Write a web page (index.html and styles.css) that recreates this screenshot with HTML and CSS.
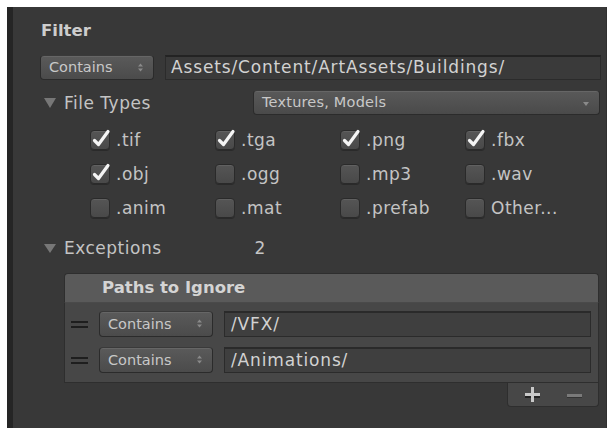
FILE: index.html
```html
<!DOCTYPE html>
<html>
<head>
<meta charset="utf-8">
<link rel="stylesheet" href="styles.css">
</head>
<body>
<div class="inspector">
  <div class="content">
    <div class="title">Filter</div>
    <div class="row filter-row">
      <div class="popup">Contains<span class="updown"><svg width="5" height="9" viewBox="0 0 5 9"><path d="M0 3.5 L2.5 0.5 L5 3.5Z M0 5.5 L2.5 8.5 L5 5.5Z" fill="#8a8a8a"/></svg></span></div>
      <div class="field">Assets/Content/ArtAssets/Buildings/</div>
    </div>
    <div class="row foldout-row">
      <div class="foldout"><span class="tri"></span>File Types</div>
      <div class="dropdown">Textures, Models<span class="caret"></span></div>
    </div>
    <div class="grid">
      <label class="cb"><span class="box checked"><svg width="22" height="22" viewBox="0 0 22 22"><path d="M4.5 12.5 L8.5 16.5 L18 3.5" fill="none" stroke="#f4f4f4" stroke-width="3.2" stroke-linecap="round" stroke-linejoin="round"/></svg></span>.tif</label>
      <label class="cb"><span class="box checked"><svg width="22" height="22" viewBox="0 0 22 22"><path d="M4.5 12.5 L8.5 16.5 L18 3.5" fill="none" stroke="#f4f4f4" stroke-width="3.2" stroke-linecap="round" stroke-linejoin="round"/></svg></span>.tga</label>
      <label class="cb"><span class="box checked"><svg width="22" height="22" viewBox="0 0 22 22"><path d="M4.5 12.5 L8.5 16.5 L18 3.5" fill="none" stroke="#f4f4f4" stroke-width="3.2" stroke-linecap="round" stroke-linejoin="round"/></svg></span>.png</label>
      <label class="cb"><span class="box checked"><svg width="22" height="22" viewBox="0 0 22 22"><path d="M4.5 12.5 L8.5 16.5 L18 3.5" fill="none" stroke="#f4f4f4" stroke-width="3.2" stroke-linecap="round" stroke-linejoin="round"/></svg></span>.fbx</label>
      <label class="cb"><span class="box checked"><svg width="22" height="22" viewBox="0 0 22 22"><path d="M4.5 12.5 L8.5 16.5 L18 3.5" fill="none" stroke="#f4f4f4" stroke-width="3.2" stroke-linecap="round" stroke-linejoin="round"/></svg></span>.obj</label>
      <label class="cb"><span class="box"></span>.ogg</label>
      <label class="cb"><span class="box"></span>.mp3</label>
      <label class="cb"><span class="box"></span>.wav</label>
      <label class="cb"><span class="box"></span>.anim</label>
      <label class="cb"><span class="box"></span>.mat</label>
      <label class="cb"><span class="box"></span>.prefab</label>
      <label class="cb"><span class="box"></span>Other...</label>
    </div>
    <div class="row exceptions-row">
      <div class="foldout small"><span class="tri"></span>Exceptions</div>
      <span class="count">2</span>
    </div>
    <div class="list">
      <div class="list-header">Paths to Ignore</div>
      <div class="list-body">
        <div class="list-row">
          <span class="handle"></span>
          <div class="popup">Contains<span class="updown"><svg width="5" height="9" viewBox="0 0 5 9"><path d="M0 3.5 L2.5 0.5 L5 3.5Z M0 5.5 L2.5 8.5 L5 5.5Z" fill="#8a8a8a"/></svg></span></div>
          <div class="field">/VFX/</div>
        </div>
        <div class="list-row">
          <span class="handle"></span>
          <div class="popup">Contains<span class="updown"><svg width="5" height="9" viewBox="0 0 5 9"><path d="M0 3.5 L2.5 0.5 L5 3.5Z M0 5.5 L2.5 8.5 L5 5.5Z" fill="#8a8a8a"/></svg></span></div>
          <div class="field">/Animations/</div>
        </div>
      </div>
      <div class="list-footer-wrap">
        <div class="list-footer">
          <span class="plus"></span>
          <span class="minus"></span>
        </div>
      </div>
    </div>
  </div>
</div>
</body>
</html>
```
FILE: styles.css
```css
* { box-sizing: border-box; }
html, body { margin: 0; padding: 0; background: #ffffff; }
body {
  font-family: "DejaVu Sans", "Liberation Sans", sans-serif;
  color: #c4c4c4;
}
.inspector {
  margin: 7px 5px 0 7px;
  width: 600px;
  height: 421px;
  background: #383838;
  border-left: 6px solid #252525;
  border-right: 1px solid #303030;
}
.content {
  padding: 14px 5px 0 27px;
}
.title {
  font-weight: bold;
  font-size: 16.5px;
  line-height: 20px;
  height: 20px;
  color: #cdcdcd;
  padding-left: 1px;
}
.row { display: flex; align-items: center; }
.filter-row { margin-top: 14px; height: 25px; gap: 11px; }
.popup {
  position: relative;
  flex: 0 0 114px;
  height: 25px;
  border-radius: 4px;
  background: linear-gradient(#5a5a5a, #4b4b4b);
  border: 1px solid #2b2b2b;
  border-top-color: #3a3a3a;
  box-shadow: inset 0 1px 0 rgba(255,255,255,0.08);
  font-size: 14.5px;
  line-height: 23px;
  padding-left: 8px;
  color: #c8c8c8;
}
.updown { position: absolute; right: 10px; top: 7px; line-height: 0; }
.field {
  flex: 1;
  height: 25px;
  background: #3a3a3a;
  border: 1px solid #2b2b2b;
  border-top: 2px solid #232323;
  font-size: 17px;
  line-height: 21px;
  padding-left: 5px;
  color: #d2d2d2;
  letter-spacing: 0.85px;
  white-space: nowrap;
}
.foldout-row { margin-top: 10px; height: 25px; justify-content: space-between; }
.foldout {
  display: flex; align-items: center;
  font-size: 17px;
  letter-spacing: 0.5px;
  color: #c4c4c4;
}
.tri {
  width: 0; height: 0;
  border-left: 6px solid transparent;
  border-right: 6px solid transparent;
  border-top: 10px solid #777777;
  margin: 1px 8px 0 4px;
}
.foldout.small .tri {
  border-left-width: 6px; border-right-width: 6px; border-top-width: 9px;
}
.dropdown {
  position: relative;
  width: 347px;
  height: 25px;
  margin-right: 1px;
  border-radius: 4px;
  background: linear-gradient(#595959, #4a4a4a);
  border: 1px solid #2b2b2b;
  border-top-color: #3a3a3a;
  box-shadow: inset 0 1px 0 rgba(255,255,255,0.08);
  font-size: 14.5px;
  letter-spacing: 0.2px;
  line-height: 23px;
  padding-left: 8px;
  color: #c8c8c8;
}
.caret {
  position: absolute; right: 10px; top: 11px;
  width: 0; height: 0;
  border-left: 3px solid transparent;
  border-right: 3px solid transparent;
  border-top: 4px solid #8a8a8a;
}
.grid {
  margin: 15px 0 0 50px;
  display: grid;
  grid-template-columns: 125px 125px 125px 125px;
  row-gap: 14px;
}
.cb {
  display: flex; align-items: center;
  height: 20px;
  font-size: 17px;
  letter-spacing: 0.5px;
  color: #c4c4c4;
}
.box {
  position: relative;
  flex: 0 0 20px;
  height: 20px;
  margin-right: 6px;
  border-radius: 4px;
  background: linear-gradient(#555555, #494949);
  border: 1px solid #2a2a2a;
  box-shadow: inset 0 1px 0 rgba(255,255,255,0.07), 0 1px 0 rgba(0,0,0,0.25);
}
.box svg { position: absolute; left: -1px; top: -3px; }
.exceptions-row { margin-top: 20px; height: 20px; }
.count { margin-left: 93px; font-size: 17px; color: #c4c4c4; }
.list {
  margin: 15px 2px 0 24px;
}
.list-header {
  height: 30px;
  background: #5a5a5a;
  border: 1px solid #2e2e2e;
  border-bottom: 1px solid #4a4a4a;
  border-radius: 4px 4px 0 0;
  font-weight: bold;
  font-size: 16.5px;
  line-height: 28px;
  padding-left: 37px;
  color: #d4d4d4;
}
.list-body {
  background: #474747;
  border: 1px solid #2e2e2e;
  border-top: none;
  padding: 8px 7px 9px 6px;
  display: flex; flex-direction: column; gap: 10px;
}
.list-row { display: flex; align-items: center; height: 26px; }
.list-row .popup { height: 26px; line-height: 24px; margin-right: 11px; }
.list-row .field { height: 26px; background: #3f3f3f; border-top-color: #2a2a2a; line-height: 22px; padding-left: 6px; }
.handle {
  width: 17px; height: 7px;
  border-top: 2px solid #1e1e1e;
  border-bottom: 2px solid #1e1e1e;
  margin-right: 11px;
}
.list-footer-wrap { display: flex; justify-content: flex-end; }
.list-footer {
  position: relative;
  width: 92px;
  height: 24px;
  background: #474747;
  border: 1px solid #2e2e2e;
  border-top: none;
  border-radius: 0 0 4px 4px;
}
.plus, .minus { position: absolute; background: #c8c8c8; }
.plus { left: 17px; top: 10px; width: 15px; height: 3px; box-shadow: 0 2px 0 #222; }
.plus::after { content: ""; position: absolute; left: 6px; top: -6px; width: 3px; height: 15px; background: #c8c8c8; }
.minus { left: 59px; top: 11px; width: 15px; height: 3px; background: #7a7a7a; box-shadow: 0 1px 0 #333; }
```
